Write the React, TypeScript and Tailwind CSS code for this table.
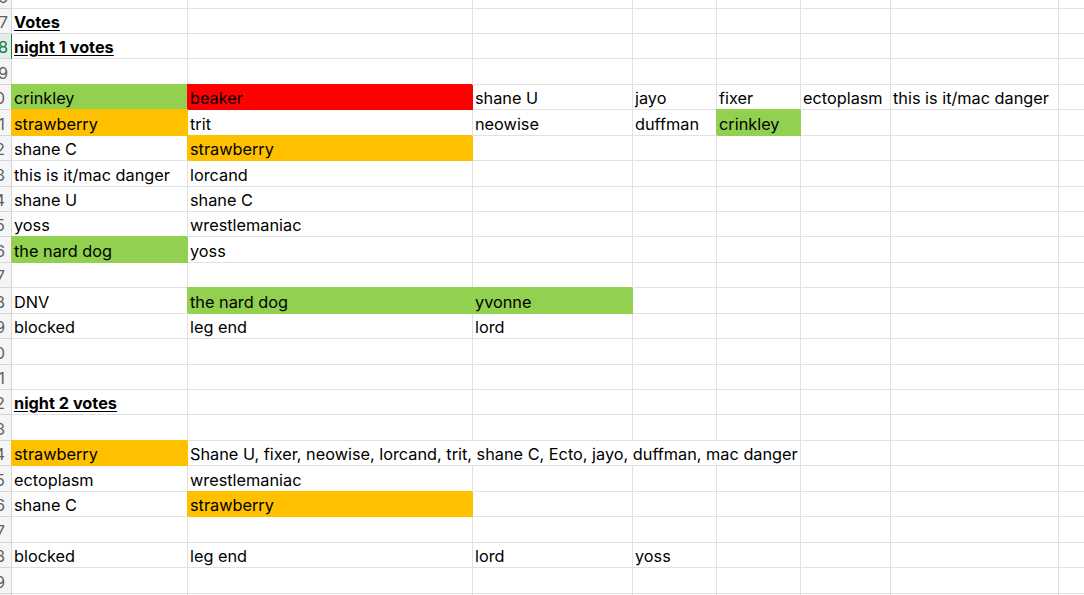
import React from 'react';

type Fill = 'green' | 'red' | 'orange';
type Cell = { col: number; text: string; fill?: Fill; span?: number; bold?: boolean };

const colWidths = ['w-[176px]', 'w-[285px]', 'w-[160px]', 'w-[84px]', 'w-[84px]', 'w-[90px]', 'w-[168px]', 'w-[120px]'];

const fills: Record<Fill, string> = {
  green: 'bg-[#92d050] border-[#92d050] shadow-[-1px_-1px_0_0_#92d050]',
  red: 'bg-[#ff0000] border-[#ff0000] shadow-[-1px_-1px_0_0_#ff0000]',
  orange: 'bg-[#ffc000] border-[#ffc000] shadow-[-1px_-1px_0_0_#ffc000]',
};

const rows: Record<number, Cell[]> = {
  7: [{ col: 0, text: 'Votes', bold: true }],
  8: [{ col: 0, text: 'night 1 votes', bold: true }],
  10: [
    { col: 0, text: 'crinkley', fill: 'green' },
    { col: 1, text: 'beaker', fill: 'red' },
    { col: 2, text: 'shane U' },
    { col: 3, text: 'jayo' },
    { col: 4, text: 'fixer' },
    { col: 5, text: 'ectoplasm' },
    { col: 6, text: 'this is it/mac danger' },
  ],
  11: [
    { col: 0, text: 'strawberry', fill: 'orange' },
    { col: 1, text: 'trit' },
    { col: 2, text: 'neowise' },
    { col: 3, text: 'duffman' },
    { col: 4, text: 'crinkley', fill: 'green' },
  ],
  12: [{ col: 0, text: 'shane C' }, { col: 1, text: 'strawberry', fill: 'orange' }],
  13: [{ col: 0, text: 'this is it/mac danger' }, { col: 1, text: 'lorcand' }],
  14: [{ col: 0, text: 'shane U' }, { col: 1, text: 'shane C' }],
  15: [{ col: 0, text: 'yoss' }, { col: 1, text: 'wrestlemaniac' }],
  16: [{ col: 0, text: 'the nard dog', fill: 'green' }, { col: 1, text: 'yoss' }],
  18: [
    { col: 0, text: 'DNV' },
    { col: 1, text: 'the nard dog', fill: 'green' },
    { col: 2, text: 'yvonne', fill: 'green' },
  ],
  19: [{ col: 0, text: 'blocked' }, { col: 1, text: 'leg end' }, { col: 2, text: 'lord' }],
  22: [{ col: 0, text: 'night 2 votes', bold: true }],
  24: [
    { col: 0, text: 'strawberry', fill: 'orange' },
    { col: 1, span: 4, text: 'Shane U, fixer, neowise, lorcand, trit, shane C, Ecto, jayo, duffman, mac danger' },
  ],
  25: [{ col: 0, text: 'ectoplasm' }, { col: 1, text: 'wrestlemaniac' }],
  26: [{ col: 0, text: 'shane C' }, { col: 1, text: 'strawberry', fill: 'orange' }],
  28: [
    { col: 0, text: 'blocked' },
    { col: 1, text: 'leg end' },
    { col: 2, text: 'lord' },
    { col: 3, text: 'yoss' },
  ],
};

// row boundaries, first line sits at y=8, each row ~25.4px
const heightClass = (n: number) => {
  if (n === 6) return 'h-[9px]';
  if (n === 30) return 'h-[25px]';
  const i = n - 7;
  const top = Math.floor(8 + i * 25.435);
  const bottom = Math.floor(8 + (i + 1) * 25.435);
  return bottom - top === 26 ? 'h-[26px]' : 'h-[25px]';
};

const RowHeader = ({ n }: { n: number }) => {
  const selected = n === 8;
  const tint = n === 11 || n === 21;
  return (
    <div
      className={`w-[12px] shrink-0 overflow-hidden flex items-end justify-end pb-[1px] border-r border-b leading-[20px] ${
        selected ? 'bg-[#e3eee7] border-r-[#217346] border-b-[#d6d6d6] text-[#217346]' : 'bg-[#f5f5f5] border-[#d6d6d6] text-[#616161]'
      } ${tint ? 'text-[#78aee8]' : ''} ${n < 10 ? 'pr-[3px]' : 'pr-[6px]'}`}
    >
      <span>{n}</span>
    </div>
  );
};

const SheetRow = ({ n }: { n: number }) => {
  const cells = rows[n] || [];
  const out: React.ReactNode[] = [];
  let c = 0;
  while (c < colWidths.length) {
    const cell = cells.find(x => x.col === c);
    if (cell && cell.span === 4) {
      out.push(
        <div key={c} className="w-[613px] shrink-0 flex items-end whitespace-nowrap pl-[2px] pb-[1px] border-r border-b border-[#e1e1e1]">
          {cell.text}
        </div>
      );
      c += 4;
      continue;
    }
    const fill = cell?.fill ? fills[cell.fill] : 'border-[#e1e1e1]';
    out.push(
      <div key={c} className={`${colWidths[c]} shrink-0 flex items-end whitespace-nowrap pl-[2px] pb-[1px] border-r border-b ${fill}`}>
        {cell && <span className={cell.bold ? 'font-bold underline underline-offset-[2px]' : ''}>{cell.text}</span>}
      </div>
    );
    c += 1;
  }
  return (
    <div className={`flex ${heightClass(n)}`}>
      <RowHeader n={n} />
      {out}
    </div>
  );
};

export default function App() {
  const nums = Array.from({ length: 25 }, (_, i) => i + 6);
  return (
    <div className="w-[1084px] h-[595px] overflow-hidden bg-white text-black font-['Inter',sans-serif] text-[16.3px] leading-[20px]">
      {nums.map(n => (
        <SheetRow key={n} n={n} />
      ))}
    </div>
  );
}
